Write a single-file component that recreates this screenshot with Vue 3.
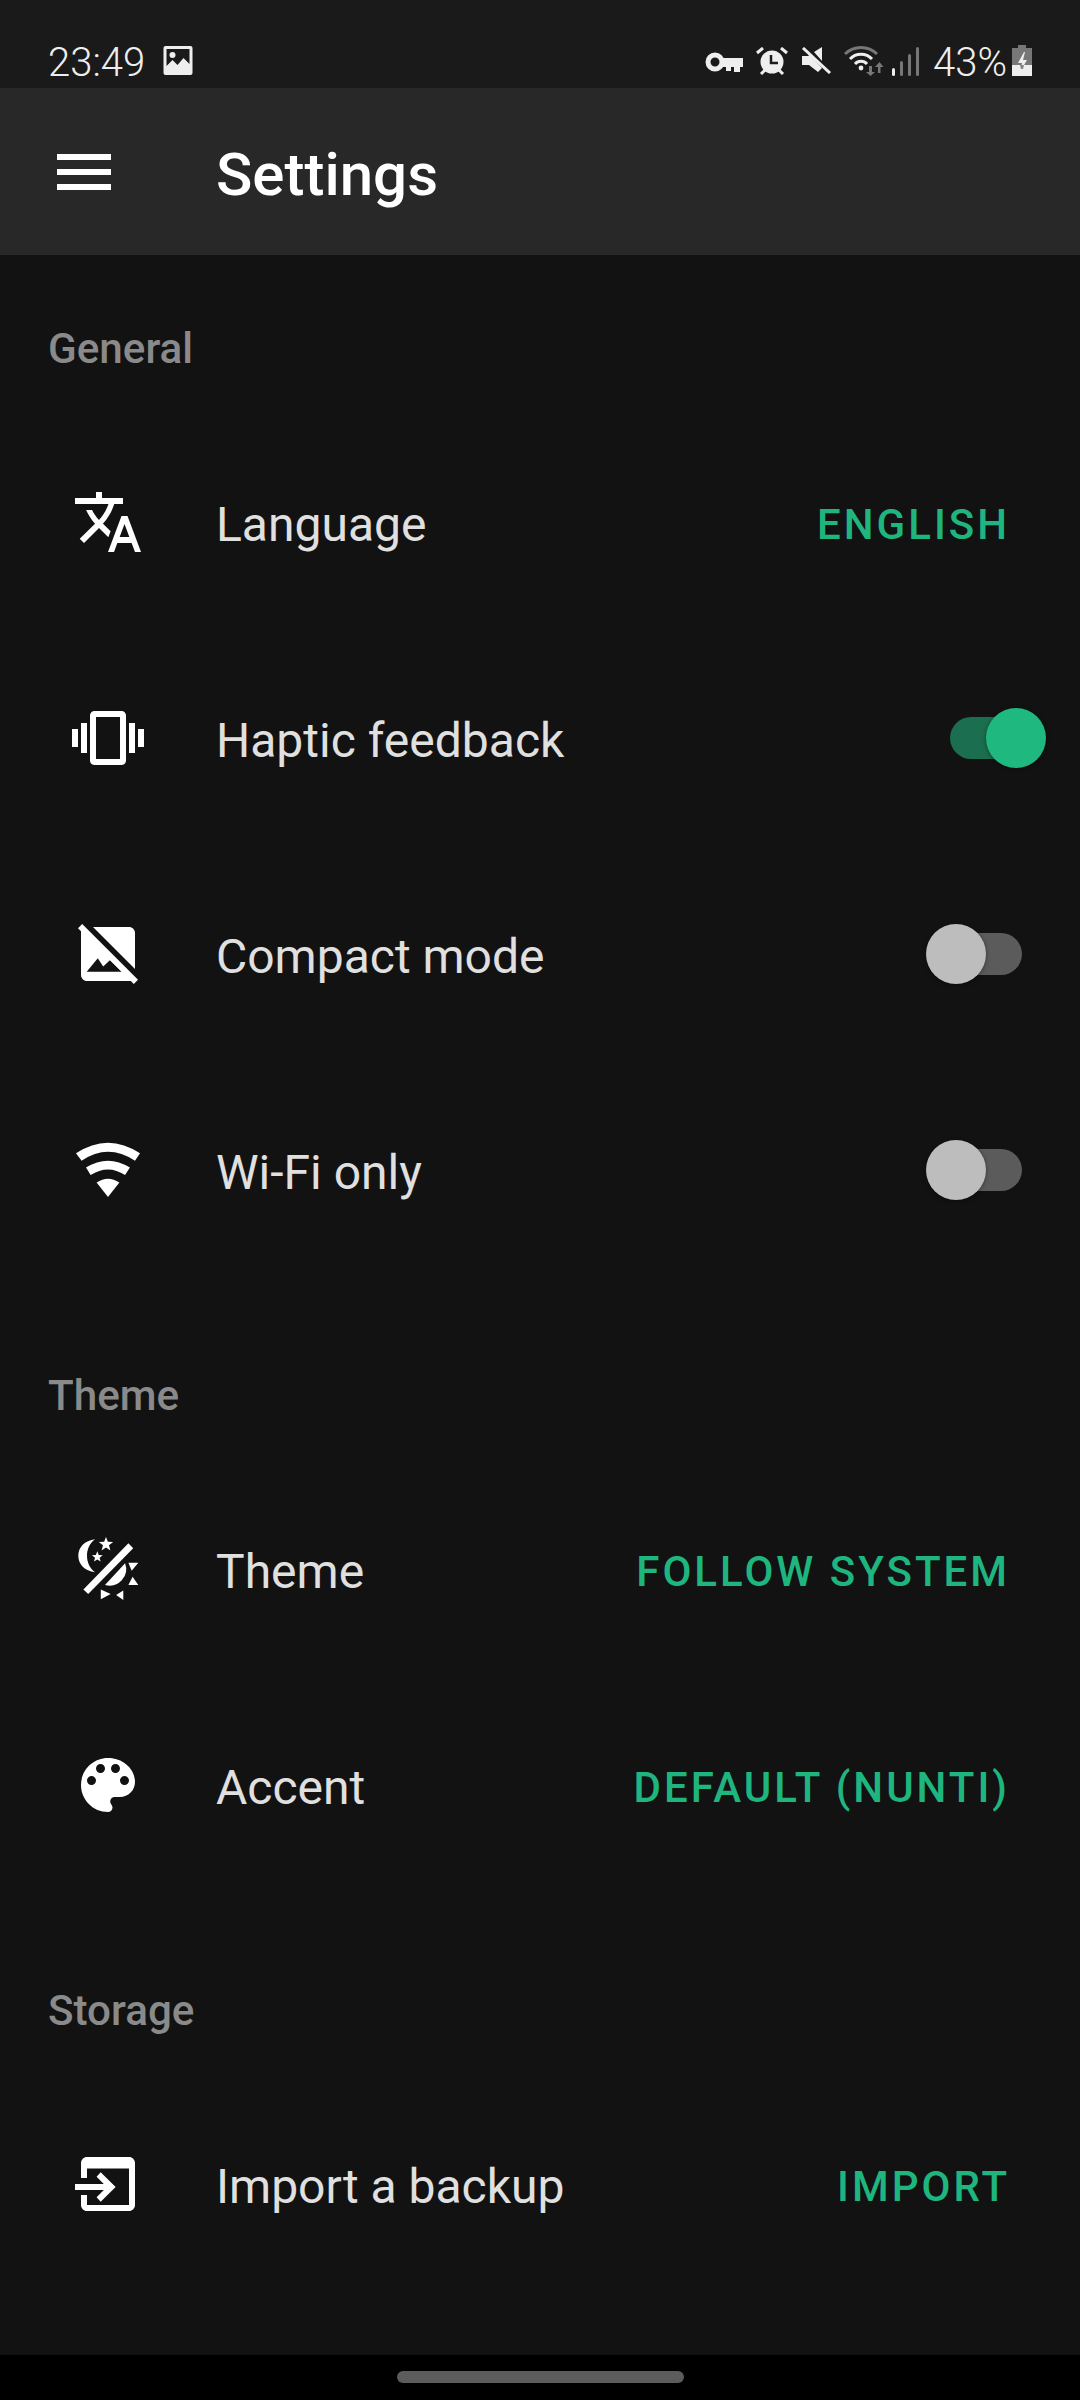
<template>
  <div class="screen">
    <div class="statusbar">
      <span class="time">23:49</span>
      <svg class="st-img" viewBox="0 0 29 29"><path fill="#eee" fill-rule="evenodd" d="M2 0h25a2 2 0 0 1 2 2v25a2 2 0 0 1-2 2H2a2 2 0 0 1-2-2V2a2 2 0 0 1 2-2zm1 3v17l6-6 5 5 6-7 6 6V3z"/><circle cx="9" cy="9" r="3" fill="#eee"/></svg>
      <div class="st-right">
        <svg class="st-key" viewBox="0 0 38 20"><circle cx="10" cy="10" r="7" fill="none" stroke="#eee" stroke-width="5"/><path fill="#eee" d="M16 6h22v9h-3v5h-6v-5h-3v4h-5v-4h-5z"/></svg>
        <svg class="st-alarm" viewBox="0 0 32 28"><circle cx="16" cy="15" r="11.500" fill="#eee"/><path d="M15 8v8h7" fill="none" stroke="#1a1a1a" stroke-width="2.5"/><path d="M1 6l6-5M31 6l-6-5M5 27l4-4M27 27l-4-4" stroke="#eee" stroke-width="3"/></svg>
        <svg class="st-mute" viewBox="0 0 29 27"><path fill="#eee" d="M0 9h6l2-1 12 13-4 4-9-7H0zM12 5l8-5v14z"/><path d="M1 1l27 25" stroke="#eee" stroke-width="3"/></svg>
        <svg class="st-wifi" viewBox="0 0 40 31"><path d="M1 9a23 23 0 0 1 32 0" fill="none" stroke="#777" stroke-width="3"/><path d="M6 14a15 15 0 0 1 22 0" fill="none" stroke="#eee" stroke-width="3"/><path d="M11 19a8 8 0 0 1 12 0" fill="none" stroke="#eee" stroke-width="3"/><circle cx="17" cy="23" r="2.4" fill="#eee"/><path fill="#777" d="M25 21h3v6h3l-4.500 4-4.500-4h3zM34 28h2.500v-6h3l-4-5-4.500 5h3z"/></svg>
        <svg class="st-signal" viewBox="0 0 27 29"><rect x="0" y="21" width="3" height="8" rx="1.500" fill="#eee"/><rect x="8" y="14" width="3" height="15" rx="1.500" fill="#777"/><rect x="16" y="7" width="3" height="22" rx="1.500" fill="#777"/><rect x="24" y="0" width="3" height="29" rx="1.500" fill="#777"/></svg>
        <span class="pct">43%</span>
        <svg class="st-batt" viewBox="0 0 20 31"><path fill="#777" d="M6 0h8v3h6v17H0V3h6z"/><rect y="20" width="20" height="11" fill="#eee"/><path fill="#eee" d="M12 7l-6 11h4l-2 9 7-12h-4l2-8z"/><path fill="#1a1a1a" d="M8 20h4l-1 4h-2z" opacity=".5"/></svg>
      </div>
    </div>

    <header class="toolbar">
      <div class="menu"><i></i><i></i><i></i></div>
      <h1>Settings</h1>
    </header>

    <main class="content">
      <section v-for="(s, i) in sections" :key="s.title" :class="{ first: i === 0 }">
        <h2>{{ s.title }}</h2>
        <div v-for="r in s.rows" :key="r.label" class="row">
          <svg class="icon" viewBox="0 0 24 24" fill="#fff"><path v-for="d in r.icon" :key="d" :d="d" /></svg>
          <span class="label">{{ r.label }}</span>
          <span v-if="r.value" class="value">{{ r.value }}</span>
          <div v-if="r.toggle !== undefined" class="toggle" :class="{ on: r.toggle }"><b></b></div>
        </div>
      </section>
    </main>

    <div class="navbar"><div class="pill"></div></div>
  </div>
</template>

<script setup>
// five point star, used by the theme icon
const star = (cx, cy, r) => {
  let d = ''
  for (let i = 0; i < 10; i++) {
    const rad = i % 2 ? r * 0.42 : r
    const a = -Math.PI / 2 + (i * Math.PI) / 5
    d += (i ? 'L' : 'M') + (cx + rad * Math.cos(a)).toFixed(2) + ' ' + (cy + rad * Math.sin(a)).toFixed(2)
  }
  return d + 'z'
}

const sections = [
  {
    title: 'General',
    rows: [
      { label: 'Language', value: 'ENGLISH', icon: ['M12.87 15.07l-2.54-2.51.03-.03c1.74-1.94 2.98-4.17 3.71-6.53H17V4h-7V2H8v2H1v1.99h11.17C11.5 7.92 10.44 9.75 9 11.35 8.07 10.32 7.3 9.19 6.69 8h-2c.73 1.63 1.73 3.17 2.98 4.56l-5.09 5.02L4 19l5-5 3.11 3.11.76-2.04zM18.5 10h-2L12 22h2l1.12-3h4.75L21 22h2l-4.5-12zm-2.62 7l1.62-4.33L19.12 17h-3.24z'] },
      { label: 'Haptic feedback', toggle: true, icon: ['M0 15h2V9H0v6zm3 2h2V7H3v10zm19-8v6h2V9h-2zm-3 8h2V7h-2v10zM16.5 3h-9C6.67 3 6 3.67 6 4.500v15c0 .83.67 1.500 1.500 1.500h9c.83 0 1.500-.67 1.500-1.500v-15c0-.83-.67-1.500-1.500-1.500zM16 19H8V5h8v14z'] },
      { label: 'Compact mode', toggle: false, icon: [
        'M7 3h12c1.100 0 2 .9 2 2v12z',
        'M3 3.500 20.500 21H5c-1.100 0-2-.9-2-2zM4.900 17.900h11.700L12.700 14l-2.300 2.200-1.800-2.800z',
        'M3.400 2 22 20.600 20.600 22 2 3.400z'
      ] },
      { label: 'Wi-Fi only', toggle: false, icon: [
        'M1.330 6.440Q12-.64 22.670 6.440L21 8.900Q12 2.900 3.200 8.900z',
        'M4.670 11.200Q12 6.600 19.300 11.200L17.700 13.700Q12 9.900 6.200 13.700z',
        'M8.200 16.200Q12 13.600 15.800 16.200L12 21z'
      ] }
    ]
  },
  {
    title: 'Theme',
    rows: [
      { label: 'Theme', value: 'FOLLOW SYSTEM', icon: [
        'M7.700 2.100C4.200 2.500 2.100 4.800 2.100 7.600s2.100 5.100 5.600 5.500C5.900 11.800 5 9.800 5 7.600s.9-4.200 2.700-5.500z',
        star(11.33, 3.8, 2.5),
        star(8.44, 8, 1.9),
        'M3.800 18.800 18.800 3.450 20.400 5.100 5.400 20.300z',
        'M17.700 10.100A5.500 5.500 0 0 1 11 17.300z',
        'M18.800 9.900h3.300l-2.200 2.700zM22.100 17.300h-3.300l1.400-2.700zM14.700 20.700l2.400 1.600v-3.100zM9.600 18.800v3.300l3.300-1.800z'
      ] },
      { label: 'Accent', value: 'DEFAULT (NUNTI)', icon: ['M12 3c-4.970 0-9 4.030-9 9s4.030 9 9 9c.83 0 1.500-.67 1.500-1.500 0-.39-.15-.74-.39-1.010-.23-.26-.38-.61-.38-.99 0-.83.67-1.500 1.500-1.500H16c2.760 0 5-2.240 5-5 0-4.420-4.030-8-9-8zm-5.500 9c-.83 0-1.500-.67-1.500-1.500S5.670 9 6.500 9 8 9.670 8 10.500 7.330 12 6.500 12zm3-4C8.670 8 8 7.330 8 6.500S8.670 5 9.500 5s1.500.67 1.500 1.500S10.330 8 9.500 8zm5 0c-.83 0-1.500-.67-1.500-1.500S13.670 5 14.500 5s1.500.67 1.500 1.500S15.330 8 14.500 8zm3 4c-.83 0-1.500-.67-1.500-1.500S16.670 9 17.500 9s1.500.67 1.500 1.500-.67 1.500-1.500 1.500z'] }
    ]
  },
  {
    title: 'Storage',
    rows: [
      { label: 'Import a backup', value: 'IMPORT', icon: [
        'M5 3h14c1.100 0 2 .9 2 2v14c0 1.100-.9 2-2 2H5c-1.100 0-2-.9-2-2v-3.300h2V19h14V6.800H5V10H3V5c0-1.100.9-2 2-2z',
        'M9.560 8.100 14.550 13 9.560 17.900 8.200 16.450 10.600 14H1v-2h9.600L8.200 9.560z'
      ] }
    ]
  }
]
</script>

<style>
html, body { margin: 0; background: #121212; }
</style>

<style scoped>
.screen {
  width: 1080px;
  height: 2400px;
  display: flex;
  flex-direction: column;
  background: #121212;
  font-family: Roboto, sans-serif;
  overflow: hidden;
}

.statusbar {
  height: 88px;
  box-sizing: border-box;
  padding: 0 48px 12px 48px;
  background: #1a1a1a;
  display: flex;
  align-items: flex-end;
  color: #eee;
}
.time { font-size: 40px; font-weight: 300; line-height: 40px; margin-bottom: -7px; }
.st-img { width: 30px; height: 29px; margin-left: 18px; margin-bottom: 1px; }
.st-right { margin-left: auto; display: flex; align-items: flex-end; }
.st-key { width: 38px; height: 20px; margin-bottom: 4px; }
.st-alarm { width: 32px; height: 28px; margin-left: 13px; margin-bottom: 1px; }
.st-mute { width: 29px; height: 27px; margin-left: 14px; margin-bottom: 2px; }
.st-wifi { width: 40px; height: 31px; margin-left: 13px; }
.st-signal { width: 27px; height: 29px; margin-left: 8px; }
.pct { font-size: 40px; font-weight: 300; line-height: 40px; margin-left: 14px; margin-bottom: -7px; }
.st-batt { width: 20px; height: 31px; margin-left: 5px; }

.toolbar {
  height: 167px;
  background: #282828;
  display: flex;
  align-items: center;
  flex-shrink: 0;
}
.menu { width: 54px; margin-left: 57px; display: flex; flex-direction: column; gap: 9px; }
.menu i { display: block; height: 6px; background: #fff; }
.toolbar h1 {
  margin: 0 0 0 105px;
  padding-top: 6px;
  font-size: 60px;
  font-weight: 500;
  color: #fff;
}

.content { flex: 1; }
section { margin-top: 24px; }
section.first { margin-top: 0; }
h2 {
  margin: 0;
  height: 159px;
  box-sizing: border-box;
  padding: 69px 0 0 48px;
  font-size: 42.2px;
  line-height: 50px;
  font-weight: 500;
  color: #8a8a8a;
}
.row {
  height: 216px;
  display: flex;
  align-items: center;
  padding: 0 70px 0 72px;
}
.icon { width: 72px; height: 72px; flex-shrink: 0; }
.label { margin-left: 72px; padding-top: 4px; font-size: 48px; color: #e0e0e0; }
.value {
  margin-left: auto;
  padding-top: 4px;
  font-size: 42px;
  font-weight: 500;
  letter-spacing: 3px;
  color: #1fb57f;
}
.toggle {
  margin-left: auto;
  margin-right: -12px;
  width: 72px;
  height: 42px;
  border-radius: 21px;
  background: #5b5b5b;
  position: relative;
}
.toggle b {
  position: absolute;
  left: -24px;
  top: -9px;
  width: 60px;
  height: 60px;
  border-radius: 50%;
  background: #bdbdbd;
  box-shadow: 0 1px 4px rgba(0, 0, 0, 0.4);
}
.toggle.on { background: #1b6e50; }
.toggle.on b { left: 36px; background: #1fb980; }

.navbar {
  height: 45px;
  background: #000;
  display: flex;
  justify-content: center;
  flex-shrink: 0;
}
.pill { width: 287px; height: 12px; margin-top: 16px; border-radius: 6px; background: #5c5c5c; }
</style>
